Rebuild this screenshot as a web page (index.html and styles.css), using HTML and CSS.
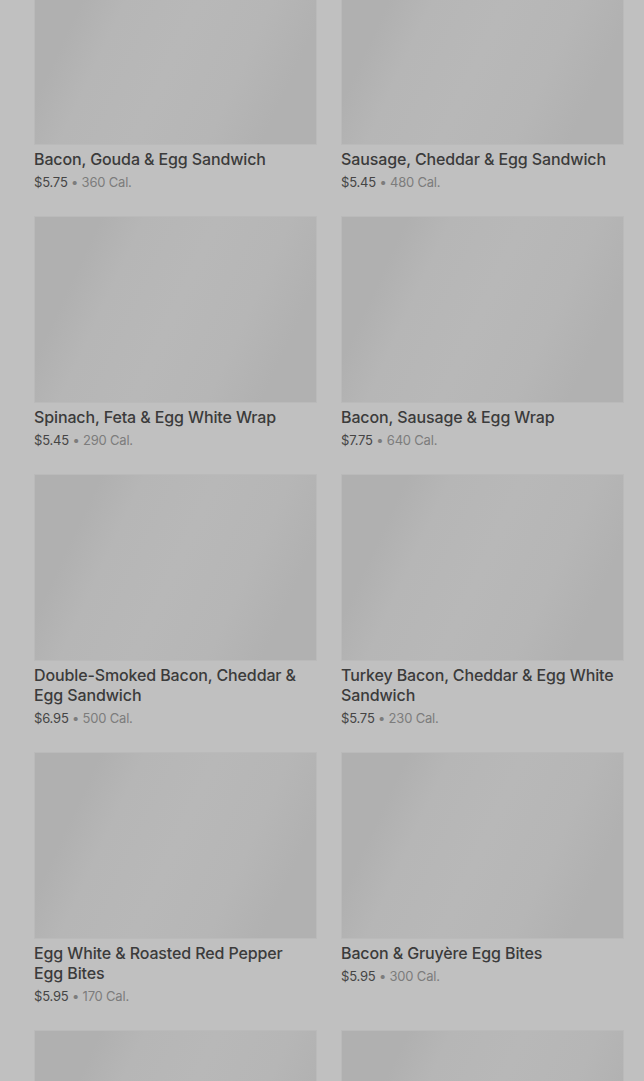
FILE: index.html
```html
<!DOCTYPE html>
<html lang="en">
<head>
  <meta charset="UTF-8" />
  <title>Breakfast Menu</title>
  <link rel="stylesheet" href="styles.css">
</head>
<body>
  <div class="menu-grid">
    <div class="item">
      <div class="thumb"></div>
      <h3>Bacon, Gouda &amp; Egg Sandwich</h3>
      <p class="meta"><span class="price">$5.75</span> • 360 Cal.</p>
    </div>
    <div class="item">
      <div class="thumb"></div>
      <h3>Sausage, Cheddar &amp; Egg Sandwich</h3>
      <p class="meta"><span class="price">$5.45</span> • 480 Cal.</p>
    </div>
    <div class="item">
      <div class="thumb"></div>
      <h3>Spinach, Feta &amp; Egg White Wrap</h3>
      <p class="meta"><span class="price">$5.45</span> • 290 Cal.</p>
    </div>
    <div class="item">
      <div class="thumb"></div>
      <h3>Bacon, Sausage &amp; Egg Wrap</h3>
      <p class="meta"><span class="price">$7.75</span> • 640 Cal.</p>
    </div>
    <div class="item">
      <div class="thumb"></div>
      <h3>Double-Smoked Bacon, Cheddar &amp; Egg Sandwich</h3>
      <p class="meta"><span class="price">$6.95</span> • 500 Cal.</p>
    </div>
    <div class="item">
      <div class="thumb"></div>
      <h3>Turkey Bacon, Cheddar &amp; Egg White Sandwich</h3>
      <p class="meta"><span class="price">$5.75</span> • 230 Cal.</p>
    </div>
    <div class="item">
      <div class="thumb"></div>
      <h3>Egg White &amp; Roasted Red Pepper Egg Bites</h3>
      <p class="meta"><span class="price">$5.95</span> • 170 Cal.</p>
    </div>
    <div class="item">
      <div class="thumb"></div>
      <h3>Bacon &amp; Gruyère Egg Bites</h3>
      <p class="meta"><span class="price">$5.95</span> • 300 Cal.</p>
    </div>
    <div class="item">
      <div class="thumb"></div>
    </div>
    <div class="item">
      <div class="thumb"></div>
    </div>
  </div>
</body>
</html>
```

FILE: styles.css
```css
html, body {
  margin: 0;
  background: #c0c0c0;
  overflow: hidden;
}
body {
  font-family: Inter, Roboto, sans-serif;
  height: 1081px;
}
.menu-grid {
  display: grid;
  grid-template-columns: 283px 283px;
  column-gap: 24px;
  row-gap: 25px;
  padding: 0 20px 0 34px;
  margin-top: -42px; /* page is scrolled */
}
.thumb {
  height: 187px;
  border: 1px solid #bababa;
  box-sizing: border-box;
  background: linear-gradient(115deg, #b0b0b0 18%, #b6b6b6 30%, #b8b8b8 50%, #b6b6b6 70%, #b1b1b1 85%);
}
.item h3 {
  margin: 4px 0 0;
  padding-right: 6px;
  font-size: 16px;
  line-height: 20px;
  font-weight: 500;
  color: #3b3b3b;
  letter-spacing: -0.12px;
}
.meta {
  margin: 4px 0 0;
  font-size: 13px;
  line-height: 18px;
  color: #7c7c7c;
  letter-spacing: -0.2px;
}
.price {
  color: #454545;
}
```
